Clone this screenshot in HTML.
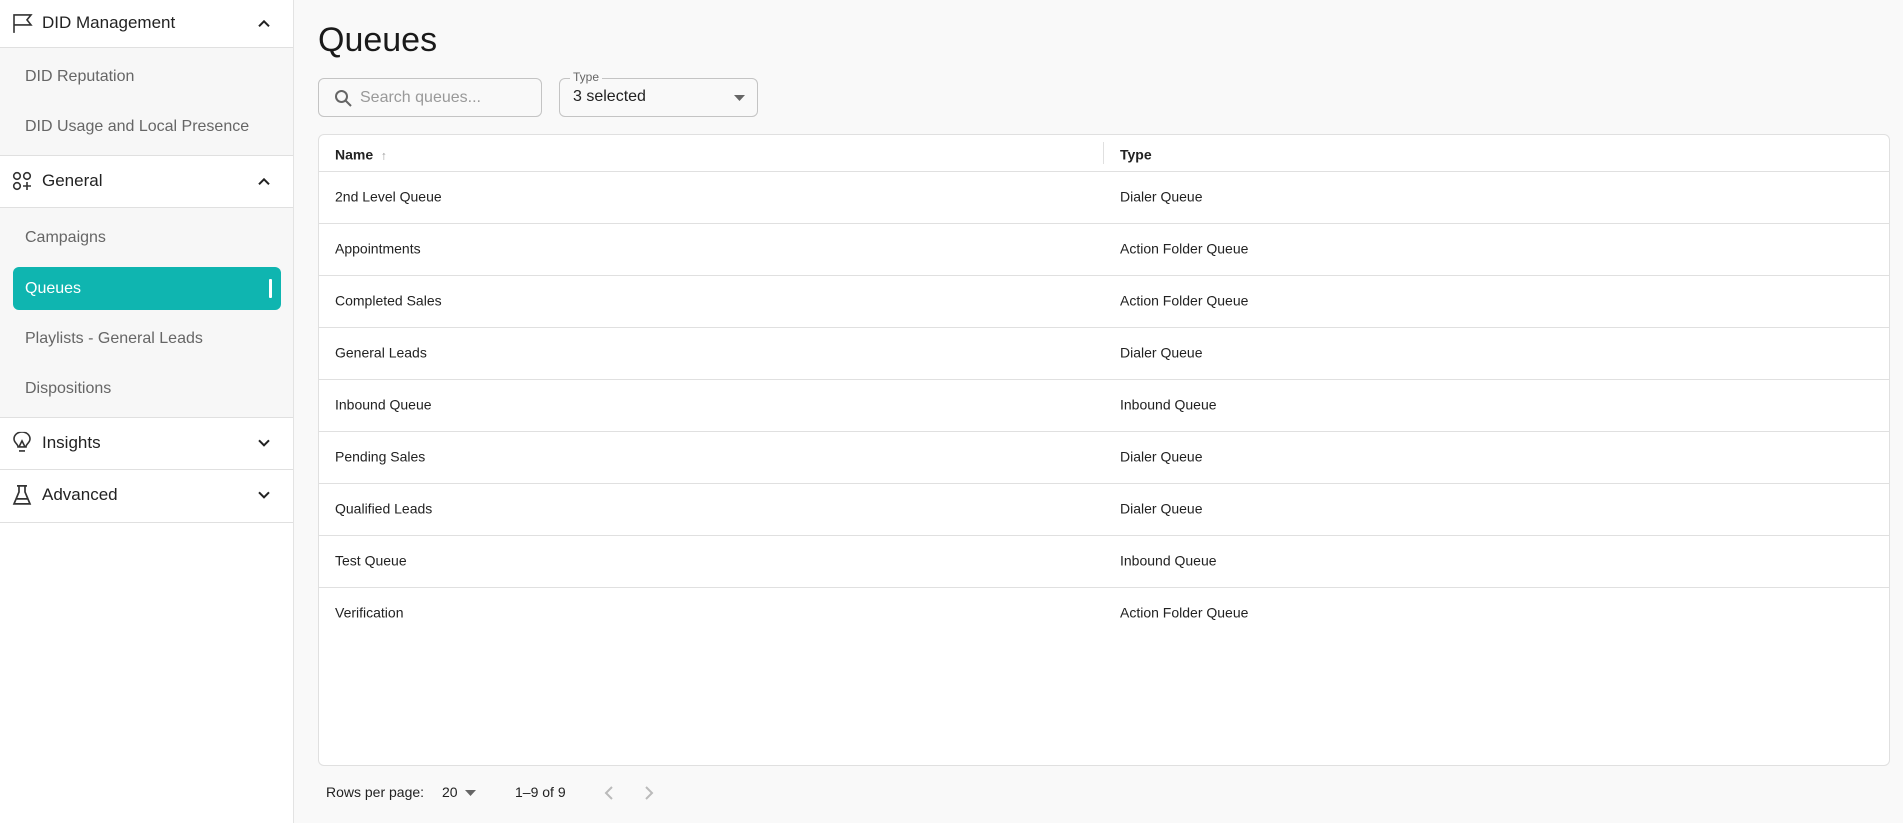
<!DOCTYPE html>
<html><head><meta charset="utf-8"><style>
*{box-sizing:border-box;margin:0;padding:0}
body{width:1903px;height:823px;overflow:hidden;background:#f9f9f9;font-family:"Liberation Sans",sans-serif;position:relative}
.sb{position:absolute;left:0;top:0;width:294px;height:823px;background:#fff;border-right:1px solid #e3e3e3}
.hd{position:absolute;left:0;width:293px;border-bottom:1px solid #e0e0e0;background:#fff;font-size:17px;color:#222}
.hd span{position:absolute;left:42px;top:50%;transform:translateY(-55%)}
.hd svg.ic{position:absolute;left:12px;top:50%;transform:translateY(-55%)}
.hd svg.ch{position:absolute;left:257px;top:50%;transform:translateY(-55%)}
.sub{position:absolute;left:0;width:293px;background:#f7f7f7;border-bottom:1px solid #e0e0e0}
.it{position:absolute;left:25px;font-size:16px;color:#666;transform:translateY(-50%)}
.act{position:absolute;left:13px;top:267px;width:268px;height:43px;background:#0fb5b0;border-radius:6px}
.act span{position:absolute;left:12px;top:50%;transform:translateY(-50%);color:#fff;font-size:16px}
.act i{position:absolute;right:9px;top:12px;width:3px;height:19px;background:#fff;border-radius:1px}
.title{position:absolute;left:318px;top:21px;font-size:34px;color:#1a1a1a}
.box{position:absolute;top:78px;height:39px;border:1px solid #c4c4c4;border-radius:6px;background:#f9f9f9}
.card{position:absolute;left:318px;top:134px;width:1572px;height:632px;background:#fff;border:1px solid #e0e0e0;border-radius:6px;overflow:hidden}
.row{position:absolute;left:0;width:100%;border-bottom:1px solid #e0e0e0;font-size:14px;color:#222}
.row .a{position:absolute;left:16px;top:50%;transform:translateY(-58%)}
.row .b{position:absolute;left:801px;top:50%;transform:translateY(-58%)}
.row.h .a,.row.h .b{transform:translateY(-42%)}
.row.last{border-bottom:none}
.pg{position:absolute;top:784px;font-size:14px;color:#222}
</style></head><body>
<div class="sb">
 <div class="hd" style="top:0;height:48px">
  <svg class="ic" width="22" height="22" viewBox="0 0 22 22" fill="none" stroke="#333" stroke-width="1.6"><path d="M2 21V3h17l-4 5 4 5H2"/></svg>
  <span>DID Management</span>
  <svg class="ch" width="14" height="14" viewBox="0 0 14 14" fill="none" stroke="#222" stroke-width="2"><path d="M2 10l5-5 5 5"/></svg>
 </div>
 <div class="sub" style="top:48px;height:108px">
  <div class="it" style="top:29px">DID Reputation</div>
  <div class="it" style="top:79px">DID Usage and Local Presence</div>
 </div>
 <div class="hd" style="top:156px;height:52px">
  <svg class="ic" width="20" height="20" viewBox="0 0 20 20" fill="none" stroke="#333" stroke-width="1.6"><circle cx="5" cy="5" r="3.3"/><circle cx="15" cy="5" r="3.3"/><circle cx="5" cy="15" r="3.3"/><path d="M15 11v8M11 15h8"/></svg>
  <span>General</span>
  <svg class="ch" width="14" height="14" viewBox="0 0 14 14" fill="none" stroke="#222" stroke-width="2"><path d="M2 10l5-5 5 5"/></svg>
 </div>
 <div class="sub" style="top:208px;height:210px">
  <div class="it" style="top:30px">Campaigns</div>
  <div class="it" style="top:131px">Playlists - General Leads</div>
  <div class="it" style="top:181px">Dispositions</div>
 </div>
 <div class="act"><span>Queues</span><i></i></div>
 <div class="hd" style="top:418px;height:52px">
  <svg class="ic" width="20" height="22" viewBox="0 0 20 22" fill="none" stroke="#333" stroke-width="1.6"><path d="M6 15c0-3-4-4-4-8a8 7 0 0 1 16 0c0 4-4 5-4 8zM7 19h6M7 15l3-6 3 6"/></svg>
  <span>Insights</span>
  <svg class="ch" width="14" height="14" viewBox="0 0 14 14" fill="none" stroke="#222" stroke-width="2"><path d="M2 4l5 5 5-5"/></svg>
 </div>
 <div class="hd" style="top:470px;height:53px">
  <svg class="ic" width="20" height="22" viewBox="0 0 20 22" fill="none" stroke="#333" stroke-width="1.7"><path d="M5 2h10M7 2v6L2 20h16L13 8V2M4 15h12"/></svg>
  <span>Advanced</span>
  <svg class="ch" width="14" height="14" viewBox="0 0 14 14" fill="none" stroke="#222" stroke-width="2"><path d="M2 4l5 5 5-5"/></svg>
 </div>
</div>
<div class="title">Queues</div>
<div class="box" style="left:318px;width:224px">
 <svg style="position:absolute;left:15px;top:10px" width="19" height="19" viewBox="0 0 19 19" fill="none" stroke="#666" stroke-width="2"><circle cx="7.5" cy="7.5" r="5.5"/><path d="M11.5 11.5l5.5 5.5"/></svg>
 <span style="position:absolute;left:41px;top:10px;font-size:16px;color:#999">Search queues...</span>
</div>
<div class="box" style="left:559px;width:199px">
 <span style="position:absolute;left:10px;top:-9px;background:#f9f9f9;padding:0 3px;font-size:12px;color:#666">Type</span>
 <span style="position:absolute;left:13px;top:9px;font-size:16px;color:#222">3 selected</span>
 <svg style="position:absolute;left:174px;top:16px" width="11" height="6" viewBox="0 0 11 6"><path d="M0 0h11L5.5 6z" fill="#666"/></svg>
</div>
<div class="card">
 <div class="row h" style="top:0;height:37px;font-weight:bold"><span class="a">Name <span style="color:#999;font-weight:normal;font-size:12px;margin-left:4px">↑</span></span><span class="b">Type</span><i style="position:absolute;left:784px;top:7px;width:1px;height:22px;background:#e0e0e0"></i></div>
 <div class="row" style="top:37px;height:52px"><span class="a">2nd Level Queue</span><span class="b">Dialer Queue</span></div>
 <div class="row" style="top:89px;height:52px"><span class="a">Appointments</span><span class="b">Action Folder Queue</span></div>
 <div class="row" style="top:141px;height:52px"><span class="a">Completed Sales</span><span class="b">Action Folder Queue</span></div>
 <div class="row" style="top:193px;height:52px"><span class="a">General Leads</span><span class="b">Dialer Queue</span></div>
 <div class="row" style="top:245px;height:52px"><span class="a">Inbound Queue</span><span class="b">Inbound Queue</span></div>
 <div class="row" style="top:297px;height:52px"><span class="a">Pending Sales</span><span class="b">Dialer Queue</span></div>
 <div class="row" style="top:349px;height:52px"><span class="a">Qualified Leads</span><span class="b">Dialer Queue</span></div>
 <div class="row" style="top:401px;height:52px"><span class="a">Test Queue</span><span class="b">Inbound Queue</span></div>
 <div class="row last" style="top:453px;height:52px"><span class="a">Verification</span><span class="b">Action Folder Queue</span></div>
</div>
<div class="pg" style="left:326px">Rows per page:</div>
<div class="pg" style="left:442px">20</div>
<svg style="position:absolute;left:465px;top:790px" width="11" height="6" viewBox="0 0 11 6"><path d="M0 0h11L5.5 6z" fill="#666"/></svg>
<div class="pg" style="left:515px">1–9 of 9</div>
<svg style="position:absolute;left:603px;top:785px" width="12" height="16" viewBox="0 0 12 16" fill="none" stroke="#bbb" stroke-width="2"><path d="M9 2L3 8l6 6"/></svg>
<svg style="position:absolute;left:643px;top:785px" width="12" height="16" viewBox="0 0 12 16" fill="none" stroke="#bbb" stroke-width="2"><path d="M3 2l6 6-6 6"/></svg>
</body></html>
